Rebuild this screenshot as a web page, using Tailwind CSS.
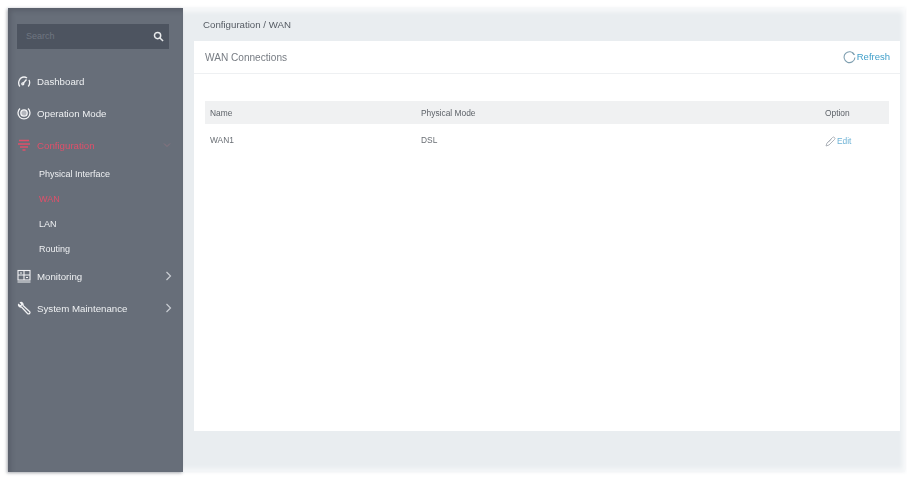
<!DOCTYPE html>
<html>
<head>
<meta charset="utf-8">
<script src="https://cdn.jsdelivr.net/npm/@tailwindcss/browser@4"></script>
</head>
<body class="bg-white font-['Liberation_Sans',sans-serif] overflow-hidden">
<div class="w-[907px] h-[480px] pl-[8px] pr-[2px] pt-[8px] pb-[8px] blur-[0.55px]">
  <div class="flex h-[464px] bg-[#e9edf0] shadow-[0_0_3px_rgba(233,237,240,0.9)]">
    <aside class="w-[175px] shrink-0 bg-[#676e79] pt-[16px] shadow-[inset_3px_3px_4px_rgba(70,76,86,0.4),-1px_1px_3px_rgba(70,76,86,0.45)] text-[9.700px] text-[#eef0f2]">
      <div class="ml-[9px] w-[152px] h-[25px] bg-[#4d5460] flex items-center justify-between pl-[9px] pr-[5px]">
        <span class="text-[#6f7681] text-[9px]">Search</span>
        <svg class="w-[11px] h-[11px]" viewBox="0 0 12 12" fill="none" stroke="#e8eaec" stroke-width="1.6"><circle cx="5" cy="5" r="3.4"/><path d="M7.600 7.600 11 11"/></svg>
      </div>
      <nav class="mt-[16px] [&_span]:pt-[2px]">
        <div class="h-[32px] flex items-center pl-[9px]">
          <svg class="w-[14px] h-[14px] mr-[6px]" viewBox="0 0 14 14" fill="none" stroke="#f2f3f5" stroke-width="1.300"><path d="M2.800 12.500C.2 9 2.400 3 7 3c1.200 0 2.200.4 3 1M12 6c1 2 .8 4.500-.8 6.500"/><path d="M6 9.500 9.500 5.500"/><circle cx="5.800" cy="9.800" r="1"/></svg>
          <span>Dashboard</span>
        </div>
        <div class="h-[32px] flex items-center pl-[9px]">
          <svg class="w-[14px] h-[14px] mr-[6px]" viewBox="0 0 14 14" fill="none" stroke="#f2f3f5" stroke-width="1.300"><path d="M3 2.500a6 6 0 1 0 8 0"/><circle cx="7" cy="7" r="3.200" fill="#f2f3f5" fill-opacity="0.55"/></svg>
          <span>Operation Mode</span>
        </div>
        <div class="h-[32px] flex items-center pl-[9px] text-[#e0506a]">
          <svg class="w-[14px] h-[14px] mr-[6px]" viewBox="0 0 14 14" fill="none" stroke="#e0506a" stroke-width="1.500"><path d="M2 2.500h10M1 6h12M3 9h8M5.500 12h3"/></svg>
          <span>Configuration</span>
          <svg class="w-[8px] h-[6px] ml-auto mr-[12px]" viewBox="0 0 8 6" fill="none" stroke="#8b7480" stroke-width="1"><path d="M1 1.500 4 4.500 7 1.500"/></svg>
        </div>
        <div class="pl-[31px] text-[9px] [&>div]:pt-[2px]">
          <div class="h-[25px] flex items-center">Physical Interface</div>
          <div class="h-[25px] flex items-center text-[#e0506a]">WAN</div>
          <div class="h-[25px] flex items-center">LAN</div>
          <div class="h-[25px] flex items-center">Routing</div>
        </div>
        <div class="h-[32px] flex items-center pl-[9px] -mt-[1px]">
          <svg class="w-[14px] h-[14px] mr-[6px]" viewBox="0 0 14 14" fill="none" stroke="#f2f3f5" stroke-width="1.100"><rect x="1" y="1.500" width="12" height="9.500"/><path d="M1 6h12M7 1.500V11M3 4h2M9 8.500h2M0.500 13h13"/></svg>
          <span>Monitoring</span>
          <svg class="w-[7px] h-[10px] ml-auto mr-[11px]" viewBox="0 0 7 10" fill="none" stroke="#c9cdd2" stroke-width="1.200"><path d="M1.500 1 5.500 5 1.500 9"/></svg>
        </div>
        <div class="h-[32px] flex items-center pl-[9px]">
          <svg class="w-[14px] h-[14px] mr-[6px]" viewBox="0 0 14 14" fill="none" stroke="#f2f3f5" stroke-width="1.200"><path d="M1.500 3.500 3.500 5 5 3.500 3.500 1.500C5 1 6.500 2.500 6 4.500L12.500 10.500a1.300 1.300 0 0 1-2 2L4.500 6C3 6.500 1.200 5 1.500 3.500Z"/></svg>
          <span>System Maintenance</span>
          <svg class="w-[7px] h-[10px] ml-auto mr-[11px]" viewBox="0 0 7 10" fill="none" stroke="#c9cdd2" stroke-width="1.200"><path d="M1.500 1 5.500 5 1.500 9"/></svg>
        </div>
      </nav>
    </aside>
    <main class="flex-1 min-w-0 pl-[11px] pr-[5px] shadow-[inset_0_4px_4px_rgba(255,255,255,0.6),inset_-3px_-4px_4px_rgba(255,255,255,0.5)]">
      <div class="h-[33px] flex items-center pl-[9px] pt-[2px] text-[9.700px] text-[#555b63]">Configuration / WAN</div>
      <section class="h-[390px] bg-white">
        <header class="h-[33px] border-b border-[#eef0f2] flex items-center justify-between pl-[11px] pr-[10px] pt-[1px]">
          <h2 class="text-[10.100px] text-[#777c83]">WAN Connections</h2>
          <div class="flex items-center gap-[1px] text-[9.500px] text-[#3f9fca]">
            <svg class="w-[13px] h-[13px]" viewBox="0 0 12 12" fill="none" stroke="#7f9fb0" stroke-width="1"><path d="M10.500 3.500A5 5 0 1 0 11 6"/><path d="M8.500 1.500 10.500 3.500"/></svg>
            <span>Refresh</span>
          </div>
        </header>
        <div class="px-[11px] pt-[27px]">
          <div class="h-[23px] bg-[#f0f1f2] flex items-center pt-[1px] text-[8.400px] text-[#5d6268]">
            <div class="w-[216px] pl-[5px]">Name</div>
            <div class="flex-1">Physical Mode</div>
            <div class="w-[64px]">Option</div>
          </div>
          <div class="h-[32px] flex items-start pt-[10px] text-[8.400px] text-[#6a6f75]">
            <div class="w-[216px] pl-[5px]">WAN1</div>
            <div class="flex-1">DSL</div>
            <div class="w-[64px] flex items-center gap-[1px] pt-[1px] text-[#6fb3d6]">
              <svg class="w-[11px] h-[11px]" viewBox="0 0 11 11" fill="none" stroke="#a6acb3" stroke-width="0.900"><path d="M1 10 2 7 7.500 1.500a1.300 1.300 0 0 1 2 2L4 9 1 10ZM3 6.500l3-3"/></svg>
              <span>Edit</span>
            </div>
          </div>
        </div>
      </section>
    </main>
  </div>
</div>
</body>
</html>
